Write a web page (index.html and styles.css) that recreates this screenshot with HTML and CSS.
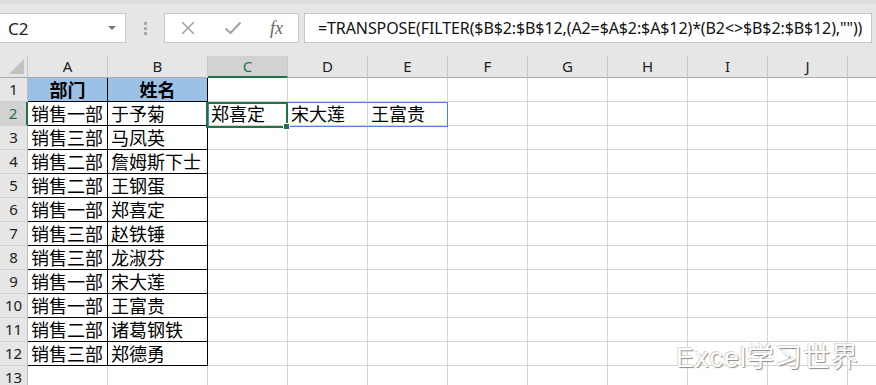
FILE: index.html
```html
<!DOCTYPE html>
<html lang="zh-CN">

<head>
    <meta charset="UTF-8">
    <meta name="viewport" content="width=device-width, initial-scale=1.0">
    <title>TRANSPOSE + FILTER</title>
    <link rel="stylesheet" href="styles.css">

    <script>
        // 根据数据动态生成表格的单元格，避免手写一百多个 div
        window.onload = function () {
            var sheet = document.getElementById("sheet");
            // 最后一列 K 只露出一小截，列标看不到，所以留空
            var cols = ["A", "B", "C", "D", "E", "F", "G", "H", "I", "J", ""];
            var depts = ["销售一部", "销售三部", "销售二部", "销售二部", "销售一部", "销售三部",
                "销售三部", "销售一部", "销售一部", "销售二部", "销售三部"];
            var names = ["于予菊", "马凤英", "詹姆斯下士", "王钢蛋", "郑喜定", "赵铁锤",
                "龙淑芬", "宋大莲", "王富贵", "诸葛钢铁", "郑德勇"];
            var spill = ["郑喜定", "宋大莲", "王富贵"];

            // 1. 左上角 + 列标
            var corner = document.createElement("div");
            corner.className = "corner";
            var tri = document.createElement("span");
            tri.className = "tri";
            corner.appendChild(tri);
            sheet.appendChild(corner);

            for (var i = 0; i < cols.length; i++) {
                var hd = document.createElement("div");
                hd.className = cols[i] == "C" ? "hd cur" : "hd";
                hd.innerHTML = cols[i];
                sheet.appendChild(hd);
            }

            // 2. 行号 + 单元格
            for (var r = 1; r <= 13; r++) {
                var rh = document.createElement("div");
                rh.className = r == 2 ? "rh cur" : "rh";
                rh.innerHTML = r;
                sheet.appendChild(rh);

                for (var x = 0; x < cols.length; x++) {
                    var cell = document.createElement("div");
                    var cls = "c";
                    var txt = "";

                    if (x < 2 && r <= 12) {
                        cls += " t";
                    }
                    if (r == 1 && x < 2) {
                        cls += " th";
                        txt = x == 0 ? "部门" : "姓名";
                    } else if (r >= 2 && r <= 12 && x < 2) {
                        txt = x == 0 ? depts[r - 2] : names[r - 2];
                    } else if (r == 2 && x >= 2 && x <= 4) {
                        txt = spill[x - 2];
                    }

                    cell.className = cls;
                    cell.innerHTML = txt;
                    sheet.appendChild(cell);
                }
            }

            // 3. 溢出区域的蓝框 和 当前单元格的绿框（绝对定位，不参与自动排列）
            var box = document.createElement("div");
            box.className = "spill";
            sheet.appendChild(box);

            var sel = document.createElement("div");
            sel.className = "sel";
            var handle = document.createElement("span");
            handle.className = "handle";
            sel.appendChild(handle);
            sheet.appendChild(sel);
        }
    </script>
</head>

<body>

    <div class="app">
        <div class="toolbar">
            <div class="namebox">
                <span>C2</span>
                <span class="caret"></span>
            </div>
            <div class="grip"><i></i><i></i><i></i></div>
            <div class="tools">
                <svg class="ico" width="16" height="16" viewBox="0 0 16 16">
                    <path d="M2 2 L14 14 M14 2 L2 14" stroke="#a6a6a6" stroke-width="1.6" fill="none" />
                </svg>
                <svg class="ico" width="18" height="16" viewBox="0 0 18 16">
                    <path d="M1.5 8.5 L6.5 13 L16.5 2.5" stroke="#a6a6a6" stroke-width="2.2" fill="none" />
                </svg>
                <span class="fx">fx</span>
            </div>
            <div class="formula">=TRANSPOSE(FILTER($B$2:$B$12,(A2=$A$2:$A$12)*(B2&lt;&gt;$B$2:$B$12),""))</div>
        </div>

        <div class="sheet" id="sheet"></div>

        <div class="watermark">Excel学习世界</div>
    </div>

</body>

</html>
```

FILE: styles.css
```css
* {
    margin: 0px;
    padding: 0px;
    box-sizing: border-box;
}

body {
    background-color: #fff;
    font-family: "Noto Sans", "Noto Sans CJK SC", sans-serif;
    color: #000;
}

.app {
    position: relative;
    width: 876px;
    height: 385px;
    overflow: hidden;
}

/* 顶部名称框 + 编辑栏 */
.toolbar {
    height: 56px;
    background-color: #e6e6e6;
    border-top: 4px solid #dcdcdc;
    padding-top: 9px;
    display: flex;
    align-items: flex-start;
}

.namebox {
    width: 126px;
    height: 30px;
    background-color: #fff;
    border: 1px solid #c8c8c8;
    border-left: none;
    padding: 0 8px 0 8px;
    display: flex;
    align-items: center;
    justify-content: space-between;
    font-size: 17px;
    color: #222;
}

.caret {
    width: 0;
    height: 0;
    border-left: 4px solid transparent;
    border-right: 4px solid transparent;
    border-top: 4px solid #777;
    margin-right: 1px;
}

.grip {
    width: 38px;
    height: 30px;
    display: flex;
    flex-direction: column;
    align-items: center;
    justify-content: center;
    gap: 2px;
}

.grip i {
    width: 3px;
    height: 3px;
    background-color: #a8a8a8;
}

.tools {
    width: 135px;
    height: 30px;
    background-color: #fff;
    border: 1px solid #c8c8c8;
    display: flex;
    align-items: center;
    padding-left: 15px;
    gap: 28px;
}

.fx {
    font-family: "Liberation Serif", serif;
    font-style: italic;
    font-size: 18px;
    color: #666;
}

.formula {
    flex: 1;
    height: 30px;
    margin-left: 5px;
    margin-right: 4px;
    background-color: #fff;
    border: 1px solid #c8c8c8;
    padding-left: 13px;
    font-size: 16px;
    letter-spacing: -0.1px;
    line-height: 28px;
    white-space: nowrap;
    overflow: hidden;
    color: #111;
}

/* 表格区域 */
.sheet {
    position: relative;
    display: grid;
    grid-template-columns: 28px 80px 100px repeat(8, 80px) 80px;
    grid-template-rows: 22px repeat(13, 24px);
    width: 928px;
}

.corner {
    background-color: #e6e6e6;
    border-right: 1px solid #c8c8c8;
    border-bottom: 1px solid #ababab;
    display: flex;
    justify-content: flex-end;
    align-items: flex-end;
    padding: 0 3px 3px 0;
}

.tri {
    width: 0;
    height: 0;
    border-left: 15px solid transparent;
    border-bottom: 15px solid #c2c2c2;
}

.hd {
    background-color: #e6e6e6;
    border-right: 1px solid #c8c8c8;
    border-bottom: 1px solid #ababab;
    text-align: center;
    font-size: 15px;
    line-height: 21px;
    color: #222;
}

.hd.cur {
    background-color: #d2d2d2;
    color: #217346;
    border-bottom: 2px solid #217346;
}

.rh {
    background-color: #e6e6e6;
    border-right: 1px solid #bdbdbd;
    border-bottom: 1px solid #d0d0d0;
    text-align: center;
    font-size: 15px;
    line-height: 23px;
    color: #222;
}

.rh.cur {
    background-color: #d2d2d2;
    color: #217346;
    border-right: 2px solid #217346;
}

.c {
    border-right: 1px solid #d4d4d4;
    border-bottom: 1px solid #d4d4d4;
    padding-left: 3px;
    font-family: "Noto Sans CJK SC", sans-serif;
    font-size: 18px;
    line-height: 23px;
    white-space: nowrap;
}

.c.t {
    border-right-color: #000;
    border-bottom-color: #000;
}

.c.th {
    background-color: #9bc2e6;
    font-weight: 700;
    text-align: center;
    padding-left: 0;
}

/* 叠在单元格上面的选框 */
.spill {
    position: absolute;
    grid-row: 3 / 4;
    grid-column: 4 / 7;
    top: 0;
    left: 0;
    right: 0;
    bottom: -1px;
    border: 1px solid #4a86d8;
}

.sel {
    position: absolute;
    grid-row: 3 / 4;
    grid-column: 4 / 5;
    top: 0;
    left: -2px;
    right: 0;
    bottom: -2px;
    border: 2px solid #217346;
}

.sel .handle {
    position: absolute;
    right: -4px;
    bottom: -4px;
    width: 7px;
    height: 7px;
    background-color: #217346;
    border: 1px solid #fff;
}

.watermark {
    position: absolute;
    left: 676px;
    top: 336px;
    font-family: "Liberation Sans", "Noto Sans CJK SC", sans-serif;
    font-size: 27px;
    letter-spacing: 1px;
    color: #fff;
    text-shadow: 1px 1px 1px #8a8a8a, -1px -1px 0 #d8d8d8;
}
```
